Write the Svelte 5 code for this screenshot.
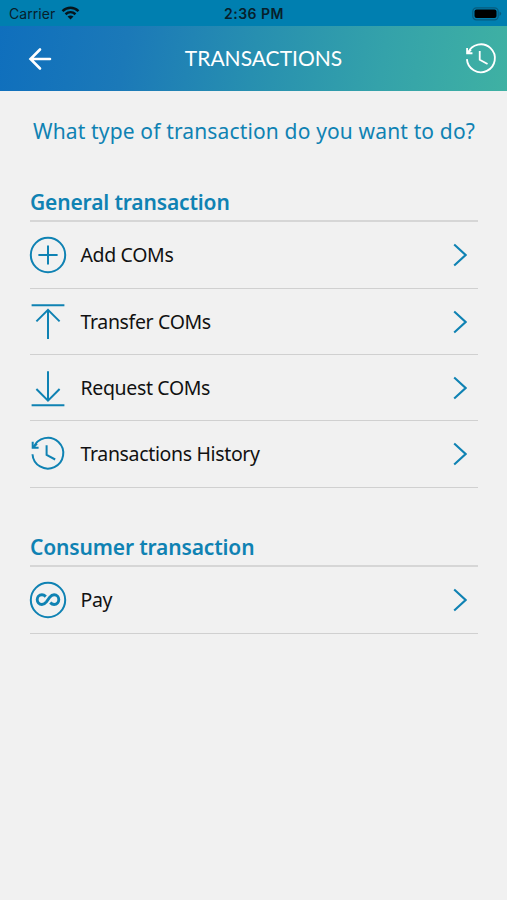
<script lang="ts">
    type Item = { label: string; icon: string };
    type Section = { title: string; items: Item[] };

    const sections: Section[] = [
        {
            title: "General transaction",
            items: [
                { label: "Add COMs", icon: "add" },
                { label: "Transfer COMs", icon: "transfer" },
                { label: "Request COMs", icon: "request" },
                { label: "Transactions History", icon: "history" },
            ],
        },
        {
            title: "Consumer transaction",
            items: [{ label: "Pay", icon: "pay" }],
        },
    ];
</script>

{#snippet clock()}
    <path d="M2.5 18.2A15.4 15.4 0 1 0 3.6 11.4" />
    <path d="M2.7 5.8V11.7H8.6M2.9 11.4L7 7.8" />
    <path d="M16.6 9.3V18.9L25.2 23.5" />
{/snippet}

<div class="screen">
    <div class="status-bar">
        <div class="carrier">
            <span>Carrier</span>
            <svg class="wifi" viewBox="0 0 18 14">
                <path d="M1 5.1C5.7.7 12.3.7 17 5.1" />
                <path d="M4 8.2C7 5.5 11 5.5 14 8.2" />
                <path class="dot" d="M6 10.6Q9 8.4 12 10.6L9 13.6Z" />
            </svg>
        </div>
        <span class="time">2:36 PM</span>
        <svg class="battery" viewBox="0 0 30 14">
            <rect class="shell" x=".8" y=".8" width="25.4" height="12" rx="3.6" />
            <rect x="2.5" y="2.5" width="22" height="8.6" rx="2" />
            <path class="cap" d="M27.5 4.6Q31 6.8 27.5 9Z" />
        </svg>
    </div>

    <header class="nav">
        <button class="nav-button" aria-label="Back">
            <svg class="back" viewBox="0 0 24 24">
                <path d="M22 12H3M12 2.5L2.5 12L12 21.5" />
            </svg>
        </button>
        <h1>TRANSACTIONS</h1>
        <button class="nav-button right" aria-label="History">
            <svg class="nav-clock" viewBox="1.5 1.5 33 33">{@render clock()}</svg>
        </button>
    </header>

    <main>
        <p class="question">What type of transaction do you want to do?</p>

        {#each sections as section}
            <section>
                <h2>{section.title}</h2>
                <ul>
                    {#each section.items as item}
                        <li>
                            <svg class="icon" viewBox="0 0 36 36">
                                {#if item.icon === "add"}
                                    <circle cx="18" cy="18" r="17.2" />
                                    <path d="M18 8.4V27.6M8.4 18H27.6" />
                                {:else if item.icon === "transfer"}
                                    <path d="M1.6 1.2H34.4M18 35V6M6.4 17.4L18 5.8L29.6 17.4" />
                                {:else if item.icon === "request"}
                                    <path d="M1.6 35.2H34.4M18 1.2V30.5M6.4 19L18 30.6L29.6 19" />
                                {:else if item.icon === "history"}
                                    {@render clock()}
                                {:else}
                                    <circle cx="18" cy="18" r="17.2" />
                                    <path
                                        class="infinity"
                                        d="M15.8 14.6C14.4 13.2 13.2 12.7 11.9 12.7C9.1 12.7 7.2 14.9 7.2 17.6S9.1 22.5 11.9 22.5C13.8 22.5 15.2 21.3 16.4 19.8L19.6 15.4C20.8 13.9 22.2 12.7 24.1 12.7C26.9 12.7 28.8 14.9 28.8 17.6S26.9 22.5 24.1 22.5C22.8 22.5 21.6 22 20.2 20.6"
                                    />
                                {/if}
                            </svg>
                            <span class="label">{item.label}</span>
                            <svg class="chevron" viewBox="0 0 14 24">
                                <path d="M1.2 1.5L12.6 12L1.2 22.5" />
                            </svg>
                        </li>
                    {/each}
                </ul>
            </section>
        {/each}
    </main>
</div>

<style>
    :global(body) {
        margin: 0;
        background: #f1f1f1;
    }

    .screen {
        width: 507px;
        height: 900px;
        background: #f1f1f1;
        color: #111;
        font-family: "Noto Sans", sans-serif;
        overflow: hidden;
    }

    .status-bar {
        display: grid;
        grid-template-columns: 1fr auto 1fr;
        align-items: center;
        height: 26px;
        padding: 1px 5px 0 9px;
        box-sizing: border-box;
        background: #007fb0;
        color: #07202b;
        font-family: Inter, sans-serif;
        font-size: 14px;
        line-height: 26px;
    }

    .carrier {
        display: flex;
        align-items: center;
        gap: 6px;
        letter-spacing: 0.05px;
    }

    .wifi {
        width: 19px;
        height: 14px;
        margin-top: -2px;
        fill: none;
        stroke: #06141b;
        stroke-width: 2.5;
    }

    .wifi .dot {
        fill: #06141b;
        stroke: none;
    }

    .time {
        margin-right: 3px;
        font-weight: 600;
        letter-spacing: 0.5px;
    }

    .battery {
        justify-self: end;
        width: 30px;
        height: 14px;
        margin-top: -1px;
    }

    .battery .shell {
        fill: none;
        stroke: #075c7e;
        stroke-width: 1.2;
    }

    .battery .cap {
        fill: #075c7e;
    }

    .nav {
        display: grid;
        grid-template-columns: 90px 1fr 70px;
        align-items: center;
        height: 65px;
        background: linear-gradient(100deg, #0f6fbd 0%, #1b79b8 25%, #278fb0 50%, #34a2aa 75%, #3fb1a3 100%);
        color: #fff;
    }

    .nav-button {
        display: flex;
        padding: 0 0 0 28px;
        border: 0;
        background: none;
    }

    .nav-button.right {
        justify-content: flex-end;
        padding: 0 11px 0 0;
    }

    .nav svg {
        fill: none;
        stroke: #fff;
    }

    .back {
        width: 24px;
        height: 24px;
        stroke-width: 2.6;
        stroke-linecap: round;
    }

    .nav-clock {
        width: 30px;
        height: 30px;
        stroke-width: 2;
        overflow: visible;
    }

    h1 {
        margin: 0 0 2px;
        font-family: Lato, sans-serif;
        font-size: 21px;
        font-weight: 400;
        line-height: 28px;
        text-align: center;
    }

    main {
        padding: 25px 29px 0 30px;
    }

    .question {
        margin: 0 0 40px;
        color: #0f82b3;
        font-size: 21px;
        letter-spacing: 0.15px;
        line-height: 30px;
        text-align: center;
        white-space: nowrap;
    }

    section {
        margin-bottom: 43px;
    }

    h2 {
        margin: 0;
        height: 34px;
        color: #0f82b3;
        font-size: 21px;
        font-weight: 600;
        letter-spacing: -0.15px;
        line-height: 32px;
        white-space: nowrap;
    }

    ul {
        margin: 0;
        padding: 0;
        border-top: 2px solid #d6d6d6;
        list-style: none;
    }

    li {
        display: flex;
        align-items: center;
        height: 66.2px;
        padding-right: 11px;
        box-sizing: border-box;
        border-bottom: 1.5px solid #d0d0d0;
    }

    li:first-child {
        height: 67px;
    }

    .icon {
        width: 36px;
        height: 36px;
        fill: none;
        stroke: #0f82b3;
        stroke-width: 2;
        overflow: visible;
    }

    .icon .infinity {
        stroke-width: 2.9;
    }

    .label {
        flex: 1;
        padding-left: 14.5px;
        color: #111;
        font-size: 19.5px;
        letter-spacing: -0.35px;
        line-height: 28px;
        white-space: nowrap;
    }

    .chevron {
        width: 14px;
        height: 24px;
        fill: none;
        stroke: #0f82b3;
        stroke-width: 2.1;
    }
</style>
